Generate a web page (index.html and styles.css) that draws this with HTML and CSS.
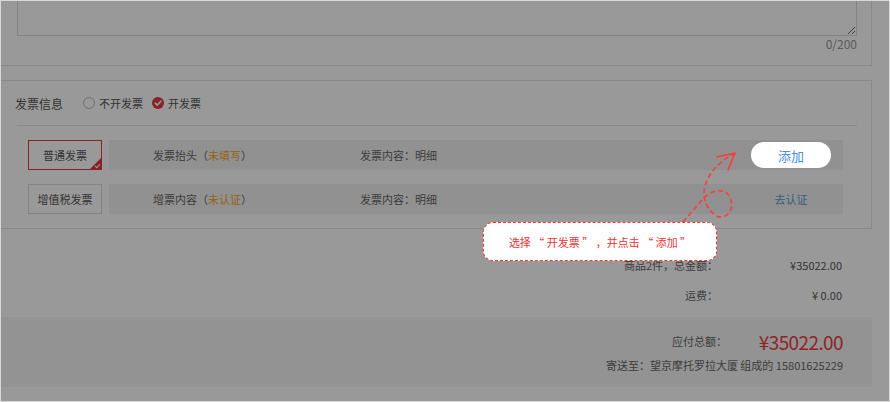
FILE: index.html
```html
<!DOCTYPE html>
<html lang="zh-CN">
<head>
  <meta charset="UTF-8" />
  <title>订单结算 - 发票信息</title>
  <link rel="stylesheet" href="styles.css">
</head>
<body>

  <div class="frame">
    <div class="page">
      <!-- 备注 -->
      <div class="card remark">
        <textarea class="remark-input"></textarea>
        <div class="counter">0/200</div>
      </div>

      <!-- 发票信息 -->
      <div class="card invoice">
        <div class="invoice-head">
          <span class="invoice-title">发票信息</span>
          <label class="radio"><span class="radio-dot"></span>不开发票</label>
          <label class="radio checked">
            <span class="radio-dot">
              <svg width="12" height="12" viewBox="0 0 12 12"><path d="M3.2 6.1 L5.2 8.1 L8.9 4.2" fill="none" stroke="#fff" stroke-width="1.6" stroke-linecap="round" stroke-linejoin="round"/></svg>
            </span>开发票
          </label>
        </div>

        <div class="invoice-rows">
          <div class="invoice-row">
            <div class="type-btn active">普通发票<span class="corner"></span></div>
            <div class="row-band">
              <span class="col-title">发票抬头（<em class="warn">未填写</em>）</span>
              <span class="col-content">发票内容：明细</span>
              <span class="row-action"><button class="add-btn">添加</button></span>
            </div>
          </div>
          <div class="invoice-row">
            <div class="type-btn">增值税发票</div>
            <div class="row-band">
              <span class="col-title">增票内容（<em class="warn">未认证</em>）</span>
              <span class="col-content">发票内容：明细</span>
              <span class="row-action"><a class="link">去认证</a></span>
            </div>
          </div>
        </div>
      </div>

      <!-- 金额 -->
      <div class="summary">
        <div class="summary-row">
          <span class="summary-label">商品2件，总金额：</span>
          <span class="summary-value">¥35022.00</span>
        </div>
        <div class="summary-row">
          <span class="summary-label">运费：</span>
          <span class="summary-value">¥ 0.00</span>
        </div>
      </div>

      <div class="total-band">
        <div class="total-line">
          <span class="total-label">应付总额：</span>
          <span class="total-value">¥35022.00</span>
        </div>
        <div class="address">寄送至：望京摩托罗拉大厦 组成的 15801625229</div>
      </div>
    </div>

    <!-- 引导遮罩 -->
    <div class="mask"></div>
    <svg class="guide-arrow" width="890" height="402" viewBox="0 0 890 402">
      <path d="M683 222 L702 200 C709 191 724 186 730 197 C736 210 725 222 715 215 C706 208 702 197 705 186 C709 172 720 161 734 154" fill="none" stroke="#ff3b3b" stroke-width="1.6" stroke-dasharray="5 3"/>
      <path d="M717 157 L735 153 L728 170" fill="none" stroke="#ff3b3b" stroke-width="1.6" stroke-linecap="round" stroke-linejoin="round"/>
    </svg>
    <div class="guide-tip">选择 “ 开发票 ” ，并点击 “ 添加 ”</div>
  </div>

</body>
</html>
```

FILE: styles.css
```css
body {
  margin: 0;
}

.frame {
  width: 890px;
  height: 402px;
  box-sizing: border-box;
  border: 1px solid #d9d9d9;
  position: relative;
  overflow: hidden;
  background: #fff;
  font-family: "Noto Sans CJK SC", "Noto Sans", sans-serif;
  font-size: 11px;
  color: #666;
}

.page {
  margin-top: -45px;
}

.card {
  width: 871px;
  box-sizing: border-box;
  border: 1px solid #e5e5e5;
  border-left: none;
}

/* 备注 */
.remark {
  padding: 15px 14px 14px 16px;
}
.remark-input {
  display: block;
  width: 100%;
  height: 64px;
  margin: 0;
  box-sizing: border-box;
  border: 1px solid #ddd;
  resize: vertical;
}
.counter {
  padding-top: 1px;
  line-height: 14px;
  text-align: right;
  font-size: 12px;
  color: #999;
}

/* 发票 */
.invoice {
  margin-top: 14px;
}
.invoice-head {
  margin: 0 14px 0 16px;
  height: 44px;
  border-bottom: 1px solid #e5e5e5;
  display: flex;
  align-items: center;
}
.invoice-title {
  margin-left: -2px;
  font-size: 12px;
  color: #555;
}
.radio {
  display: flex;
  align-items: center;
  gap: 4px;
  margin-left: 20px;
  color: #555;
}
.radio.checked {
  margin-left: 9px;
}
.radio-dot {
  width: 12px;
  height: 12px;
  box-sizing: border-box;
  border: 1px solid #bbb;
  border-radius: 50%;
}
.radio.checked .radio-dot {
  border: none;
  background: #e4393c;
  display: flex;
}

.invoice-rows {
  padding: 14px 28px 14px 27px;
  display: flex;
  flex-direction: column;
  gap: 14px;
}
.invoice-row {
  display: flex;
  gap: 7px;
  height: 30px;
}
.type-btn {
  width: 74px;
  box-sizing: border-box;
  border: 1px solid #ddd;
  display: flex;
  align-items: center;
  justify-content: center;
  position: relative;
  color: #555;
}
.type-btn.active {
  border-color: #e4393c;
}
.corner {
  position: absolute;
  right: 0;
  bottom: 0;
  width: 0;
  height: 0;
  border-style: solid;
  border-width: 0 0 11px 11px;
  border-color: transparent transparent #e4393c transparent;
}
.corner::after {
  content: "";
  position: absolute;
  right: 1px;
  bottom: -9px;
  width: 4px;
  height: 2px;
  border-left: 1px solid #fff;
  border-bottom: 1px solid #fff;
  transform: rotate(-45deg);
}

.row-band {
  flex: 1;
  background: #f2f2f2;
  display: flex;
  align-items: center;
  padding: 0 12px 0 44px;
}
.col-title {
  width: 207px;
}
.col-content {
  flex: 1;
}
.warn {
  font-style: normal;
  color: #f5a623;
}
.row-action {
  width: 80px;
  text-align: center;
}
.add-btn {
  width: 80px;
  height: 26px;
  border: none;
  border-radius: 13px;
  background: #fff;
  color: #4a90d9;
  font-family: inherit;
  font-size: 13px;
  position: relative;
  z-index: 3;
}
.link {
  color: #5b9bd5;
}

/* 金额 */
.summary {
  width: 871px;
  box-sizing: border-box;
  padding: 21px 30px 0 0;
}
.summary-row {
  display: flex;
  justify-content: flex-end;
  line-height: 30px;
}
.summary-value {
  width: 124px;
  text-align: right;
  color: #555;
}

.total-band {
  width: 871px;
  box-sizing: border-box;
  margin-top: 7px;
  padding: 10px 29px 12px 0;
  background: #f5f5f5;
}
.total-line {
  display: flex;
  justify-content: flex-end;
  align-items: center;
  height: 28px;
}
.total-value {
  width: 116px;
  text-align: right;
  font-size: 19px;
  letter-spacing: -0.6px;
  color: #f03c3c;
}
.address {
  line-height: 20px;
  text-align: right;
}

/* 引导 */
.mask {
  position: absolute;
  inset: 0;
  background: rgba(0, 0, 0, 0.4);
  z-index: 2;
}
.guide-arrow {
  position: absolute;
  left: -1px;
  top: -1px;
  z-index: 3;
}
.guide-tip {
  position: absolute;
  left: 482px;
  top: 221px;
  width: 234px;
  height: 39px;
  box-sizing: border-box;
  border: 1px dashed #e33;
  border-radius: 10px;
  background: #fff;
  color: #e33;
  display: flex;
  align-items: center;
  justify-content: center;
  z-index: 3;
}
```
